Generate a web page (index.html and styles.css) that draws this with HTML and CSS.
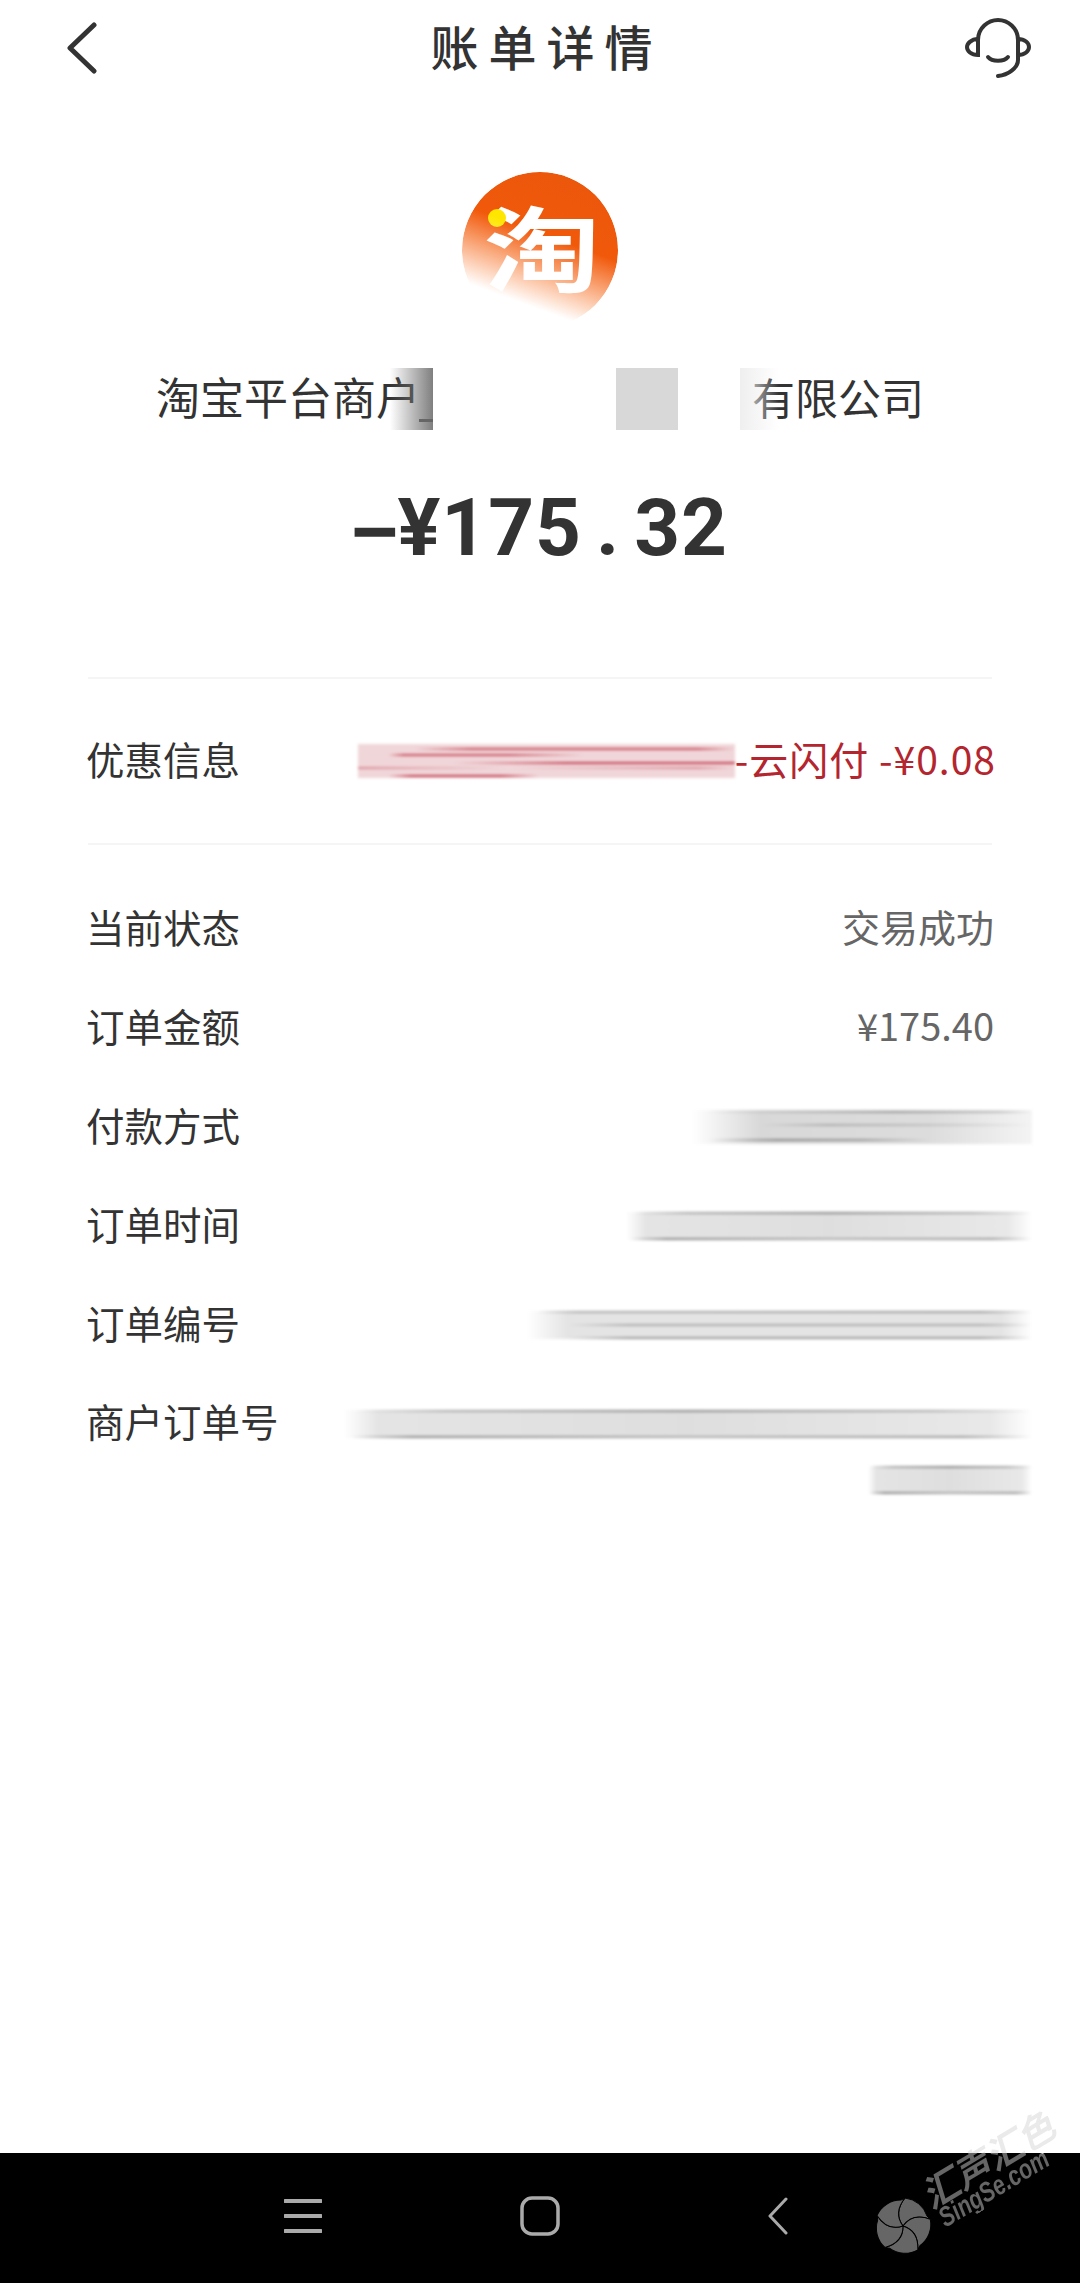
FILE: index.html
```html
<!DOCTYPE html>
<html lang="zh-CN">
  <head>
    <meta charset="UTF-8" />
    <meta name="viewport" content="width=device-width, initial-scale=1.0" />
    <title>账单详情</title>
    <link rel="stylesheet" href="styles.css">
  </head>
  <body>
    <div class="page">
      <header class="topbar">
        <svg class="back-icon" viewBox="0 0 30 52">
          <path d="M27 3 L3 26 L27 49" />
        </svg>
        <h1>账单详情</h1>
        <svg class="service-icon" viewBox="0 0 68 60">
          <path d="M14 35 L14 22 C14 10 24 2 34 2 C44 2 54 10 54 22 L54 42 C54 50 44 57 34 58" />
          <path d="M14 21 C7 21 3 26 3 29 C3 33 7 37 14 37 Z" />
          <path d="M54 21 C61 21 65 25 65 29 C65 33 61 37 54 37 Z" />
          <path d="M24 39 C28 44 40 44 44 39" />
        </svg>
      </header>

      <main class="content">
        <div class="logo">
          <span class="logo-char">淘</span>
          <span class="logo-dot"></span>
        </div>

        <div class="merchant">
          <span class="merchant-text">淘宝平台商户</span>
          <span class="hide-fade"></span>
          <span class="hide-block"></span>
          <span class="hide-light"></span>
          <span class="merchant-text merchant-tail">有限公司</span>
        </div>

        <div class="amount"><span class="amount-minus">−</span>¥175<span class="amount-dot">.</span>32</div>

        <section class="discount">
          <span class="label">优惠信息</span>
          <div class="discount-value">
            <span class="smear smear-red"></span>
            <span class="discount-text">-云闪付 -¥0.08</span>
          </div>
        </section>

        <section class="details">
          <div class="row">
            <span class="label">当前状态</span>
            <span class="value">交易成功</span>
          </div>
          <div class="row">
            <span class="label">订单金额</span>
            <span class="value">¥175.40</span>
          </div>
          <div class="row">
            <span class="label">付款方式</span>
            <span class="smear smear-pay"></span>
          </div>
          <div class="row">
            <span class="label">订单时间</span>
            <span class="smear smear-time"></span>
          </div>
          <div class="row">
            <span class="label">订单编号</span>
            <span class="smear smear-order"></span>
          </div>
          <div class="row row-top">
            <span class="label">商户订单号</span>
            <div class="smear-stack">
              <span class="smear smear-merchant"></span>
              <span class="smear smear-tail"></span>
            </div>
          </div>
        </section>
      </main>

      <nav class="navbar">
        <svg class="nav-menu" viewBox="0 0 38 34">
          <path d="M1 2 H37 M1 17 H37 M1 32 H37" />
        </svg>
        <svg class="nav-home" viewBox="0 0 40 40">
          <rect x="2" y="2" width="36" height="36" rx="10" />
        </svg>
        <svg class="nav-back" viewBox="0 0 20 38">
          <path d="M18 2 L2 19 L18 36" />
        </svg>
      </nav>

      <div class="watermark">
        <svg class="wm-fan" viewBox="-30 -30 60 60">
          <path d="M0,0 C-6,-8 -6,-18 2,-28 A26,26 0 0 1 24,-10 L27.2,-6.75 C15.3,-11.27 5.75,-8.18 0,0 Z" />
          <path transform="rotate(72)" d="M0,0 C-6,-8 -6,-18 2,-28 A26,26 0 0 1 24,-10 L27.2,-6.75 C15.3,-11.27 5.75,-8.18 0,0 Z" />
          <path transform="rotate(144)" d="M0,0 C-6,-8 -6,-18 2,-28 A26,26 0 0 1 24,-10 L27.2,-6.75 C15.3,-11.27 5.75,-8.18 0,0 Z" />
          <path transform="rotate(216)" d="M0,0 C-6,-8 -6,-18 2,-28 A26,26 0 0 1 24,-10 L27.2,-6.75 C15.3,-11.27 5.75,-8.18 0,0 Z" />
          <path transform="rotate(288)" d="M0,0 C-6,-8 -6,-18 2,-28 A26,26 0 0 1 24,-10 L27.2,-6.75 C15.3,-11.27 5.75,-8.18 0,0 Z" />
        </svg>
        <span class="wm-name">汇声汇色</span>
        <span class="wm-site">SingSe.com</span>
      </div>
    </div>
  </body>
</html>
```

FILE: styles.css
```css
* {
  box-sizing: border-box;
}
body {
  margin: 0;
  background-color: #fff;
  color: #333;
  font-family: "Noto Sans CJK SC", "Noto Sans", sans-serif;
}
.page {
  position: relative;
  width: 1080px;
  height: 2283px;
  display: flex;
  flex-direction: column;
  overflow: hidden;
}

/* top bar */
.topbar {
  height: 94px;
  flex: none;
  display: flex;
  align-items: center;
  justify-content: space-between;
  padding: 0 48px 0 67px;
}
.topbar h1 {
  margin: 0 0 4px 32px;
  font-size: 48px;
  font-weight: 500;
  letter-spacing: 10px;
  line-height: 90px;
}
.back-icon {
  width: 30px;
  height: 52px;
  margin-top: 2px;
  fill: none;
  stroke: #333;
  stroke-width: 5;
  stroke-linecap: round;
  stroke-linejoin: round;
}
.service-icon {
  width: 68px;
  height: 60px;
  margin-top: 2px;
  fill: none;
  stroke: #333;
  stroke-width: 4;
  stroke-linecap: round;
}

/* merchant header */
.content {
  flex: 1;
  display: flex;
  flex-direction: column;
  align-items: center;
}
.logo {
  position: relative;
  width: 156px;
  height: 156px;
  margin-top: 78px;
  border-radius: 50%;
  background: linear-gradient(200deg, #e9560c 0%, #f25a0a 50%, #ff6a04 100%);
  color: #fff;
  -webkit-mask-image: linear-gradient(20deg, transparent 22%, #000 58%);
  mask-image: linear-gradient(20deg, transparent 22%, #000 58%);
}
.logo-char {
  display: block;
  font-size: 104px;
  font-weight: 700;
  line-height: 156px;
  text-align: center;
  transform: translate(2px, -6px) scale(1.12, 0.9);
}
.logo-dot {
  position: absolute;
  left: 26px;
  top: 37px;
  width: 18px;
  height: 18px;
  border-radius: 50%;
  background-color: #ffe600;
}
.merchant {
  display: flex;
  align-items: center;
  height: 62px;
  margin-top: 40px;
  font-size: 44px;
  color: #333;
}
.merchant-text {
  line-height: 56px;
  padding-bottom: 6px;
}
.merchant-tail {
  font-size: 43px;
}
.hide-fade {
  position: relative;
  width: 43px;
  height: 62px;
  margin-left: -30px;
  background: linear-gradient(90deg, rgba(255, 255, 255, 0), rgba(120, 120, 120, 0.95));
}
.hide-fade::after {
  content: "";
  position: absolute;
  left: 29px;
  top: 51px;
  width: 14px;
  height: 3px;
  background-color: #666;
}
.hide-block {
  width: 62px;
  height: 62px;
  margin-left: 183px;
  background-color: #d8d8d8;
}
.hide-light {
  position: relative;
  z-index: 1;
  width: 39px;
  height: 62px;
  margin: 0 -27px 0 62px;
  background: linear-gradient(90deg, rgba(238, 238, 238, 0.95), rgba(255, 255, 255, 0));
}
.amount {
  height: 80px;
  margin-top: 58px;
  font-family: Roboto, "Liberation Sans", sans-serif;
  font-size: 80px;
  font-weight: 700;
  line-height: 80px;
  letter-spacing: 1px;
}
.amount-minus {
  display: inline-block;
  transform: translateY(5px) scaleX(1.2);
}
.amount-dot {
  margin: 0 14px;
}

/* rows */
.discount {
  width: 904px;
  height: 168px;
  margin-top: 109px;
  display: flex;
  align-items: center;
  justify-content: space-between;
  border-top: 2px solid #f5f5f5;
  border-bottom: 2px solid #f5f5f5;
}
.discount .label {
  margin-left: -2px;
}
.discount-value {
  display: flex;
  align-items: center;
  margin-right: -4px;
}
.discount-text {
  padding-bottom: 6px;
  color: #b4262f;
  font-size: 39px;
  letter-spacing: 1px;
}
.label {
  padding-bottom: 6px;
  font-size: 38.5px;
  color: #333;
}
.details {
  align-self: stretch;
  padding: 34px 85px 0 86px;
}
.row {
  height: 99px;
  display: flex;
  align-items: center;
  justify-content: space-between;
}
.row-top {
  align-items: flex-start;
}
.row-top .label {
  line-height: 93px;
}
.value {
  margin-right: 1px;
  padding-bottom: 6px;
  font-size: 38px;
  color: #666;
}

/* blurred out values */
.smear {
  display: block;
  height: 28px;
  margin-right: -37px;
  filter: blur(1.5px);
  background:
    linear-gradient(90deg, transparent 2%, #aaa 15%, #888 50%, #aaa 85%, transparent) 0 0 / 100% 2px no-repeat,
    linear-gradient(90deg, transparent 1%, #888 10%, #aaa 50%, #999 90%, transparent) 0 100% / 100% 2px no-repeat,
    linear-gradient(90deg, #fff, #e4e4e4 5%, #dedede 50%, #e8e8e8 94%, #fff);
}
.smear-red {
  width: 377px;
  height: 34px;
  margin-right: 0;
  filter: blur(1.4px);
  background:
    linear-gradient(90deg, transparent 15%, #c9505f 30%, #c9505f 90%, transparent) 0 12% / 100% 2px no-repeat,
    linear-gradient(90deg, transparent 25%, #c23e50 55%, #c23e50 100%) 0 55% / 100% 2px no-repeat,
    linear-gradient(90deg, transparent 8%, #c9505f 12%, #c9505f 40%, transparent 60%) 0 32% / 100% 2px no-repeat,
    linear-gradient(90deg, #d98a94, transparent 40%, #d98a94 90%, transparent) 0 72% / 100% 2px no-repeat,
    linear-gradient(90deg, transparent 8%, #c23e50 14%, #c23e50 38%, transparent 48%) 0 96% / 100% 2px no-repeat,
    linear-gradient(#f0d6d9, #f0d6d9);
}
.smear-pay {
  width: 340px;
  height: 34px;
  background:
    linear-gradient(90deg, transparent 5%, #bbb 30%, #999 60%, #bbb 90%, transparent) 0 5% / 100% 2px no-repeat,
    linear-gradient(90deg, transparent 20%, #aaa 40%, #bbb 65%, transparent) 0 45% / 100% 2px no-repeat,
    linear-gradient(90deg, transparent 5%, #888 25%, #999 50%, transparent 70%) 0 92% / 100% 2px no-repeat,
    linear-gradient(90deg, #fff, #d8d8d8 20%, #dcdcdc 70%, #f4f4f4);
}
.smear-time {
  width: 406px;
}
.smear-order {
  width: 505px;
  background:
    linear-gradient(90deg, transparent 2%, #aaa 10%, #999 90%, transparent) 0 0 / 100% 2px no-repeat,
    linear-gradient(90deg, transparent 8%, #aaa 20%, #aaa 90%, transparent) 0 50% / 100% 2px no-repeat,
    linear-gradient(90deg, transparent 8%, #999 20%, #999 90%, transparent) 0 100% / 100% 2px no-repeat,
    linear-gradient(90deg, #fff, #e4e4e4 8%, #e4e4e4 94%, #fff);
}
.smear-stack {
  display: flex;
  flex-direction: column;
  align-items: flex-end;
  gap: 28px;
  padding-top: 36px;
}
.smear-merchant {
  width: 688px;
}
.smear-tail {
  width: 164px;
}

/* system nav */
.navbar {
  height: 130px;
  flex: none;
  background-color: #000;
  display: flex;
  align-items: center;
  padding: 0 0 0 284px;
}
.navbar svg {
  fill: none;
  stroke: #aaa;
  stroke-linecap: round;
  stroke-linejoin: round;
}
.nav-menu {
  width: 38px;
  height: 34px;
  stroke-width: 4;
  margin-top: -4px;
}
.nav-home {
  width: 40px;
  height: 40px;
  margin: -4px 0 0 198px;
  stroke-width: 3.5;
}
.nav-back {
  width: 20px;
  height: 38px;
  margin: -4px 0 0 208px;
  stroke-width: 3;
}

/* watermark sits over the nav bar, pale where it runs onto the white page */
.watermark {
  position: absolute;
  inset: 0;
  pointer-events: none;
}
.wm-fan {
  position: absolute;
  left: 873px;
  top: 2196px;
  width: 60px;
  height: 60px;
  fill: #666;
  stroke: #000;
  stroke-width: 1;
}
.wm-name,
.wm-site {
  position: absolute;
  font-weight: 700;
  font-style: italic;
  color: transparent;
  white-space: nowrap;
  line-height: 1;
  -webkit-background-clip: text;
  background-clip: text;
}
.wm-name {
  left: 913px;
  top: 2140px;
  font-size: 37px;
  transform: rotate(-31deg);
  background-image: linear-gradient(211deg, #eaeaea 45%, #666 45%);
}
.wm-site {
  left: 925px;
  top: 2176px;
  font-family: "Liberation Sans", sans-serif;
  font-size: 24px;
  transform: rotate(-31deg) scale(0.9, 1.15);
  background-image: linear-gradient(211deg, #eaeaea 9%, #666 9%);
}
```
